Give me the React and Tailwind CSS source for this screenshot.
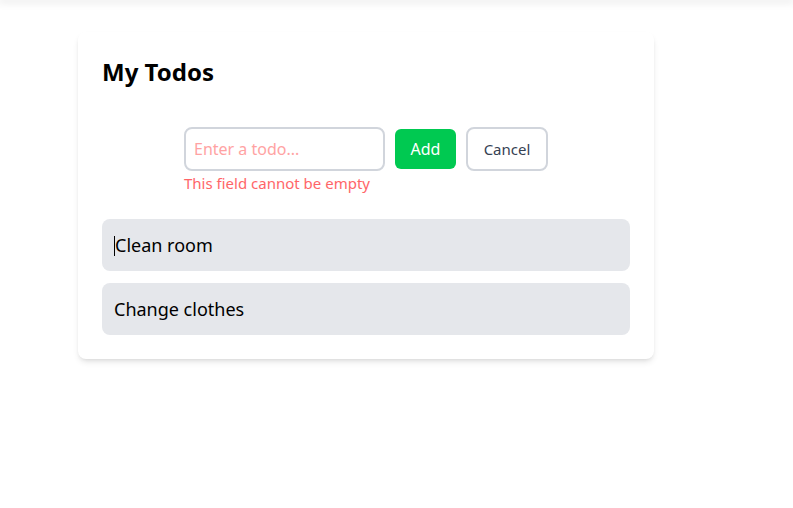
import { useState } from 'react'

const initialTodos = ['Clean room', 'Change clothes']

export default function App() {
  const [todos] = useState(initialTodos)
  const [value, setValue] = useState('')

  return (
    <div className="min-h-screen bg-white font-['Noto_Sans',sans-serif] text-black">
      <div className="h-0 shadow-[0_0_8px_2px_rgba(0,0,0,0.12)]" />

      <div className="pt-8 pl-[78px]">
        <div className="w-[576px] rounded-lg bg-white p-6 shadow-md">
          <h1 className="text-2xl font-bold leading-8">My Todos</h1>

          <div className="mt-[39px] mb-6 flex justify-center">
            <div>
              <div className="flex items-center gap-2.5">
                <input
                  value={value}
                  onChange={(e) => setValue(e.target.value)}
                  placeholder="Enter a todo..."
                  className="w-[201px] rounded-lg border-2 border-gray-300 px-2 py-2 text-base leading-6 outline-none placeholder:text-red-300"
                />
                <button className="w-[61px] rounded-md bg-green-500 py-2 text-center text-base leading-6 text-white">
                  Add
                </button>
                <button className="w-[82px] rounded-lg border-2 border-gray-300 py-2 text-center text-[15px] leading-6 text-gray-700">
                  Cancel
                </button>
              </div>
              <p className="text-[15px] leading-6 text-red-400">This field cannot be empty</p>
            </div>
          </div>

          <ul className="flex flex-col gap-3">
            {todos.map((todo, i) => (
              <li key={todo} className="rounded-lg bg-gray-200 px-3 py-3 text-lg leading-7">
                {i === 0 && <span className="inline-block h-5 w-px translate-y-1 bg-black align-baseline" />}
                {todo}
              </li>
            ))}
          </ul>
        </div>
      </div>
    </div>
  )
}
